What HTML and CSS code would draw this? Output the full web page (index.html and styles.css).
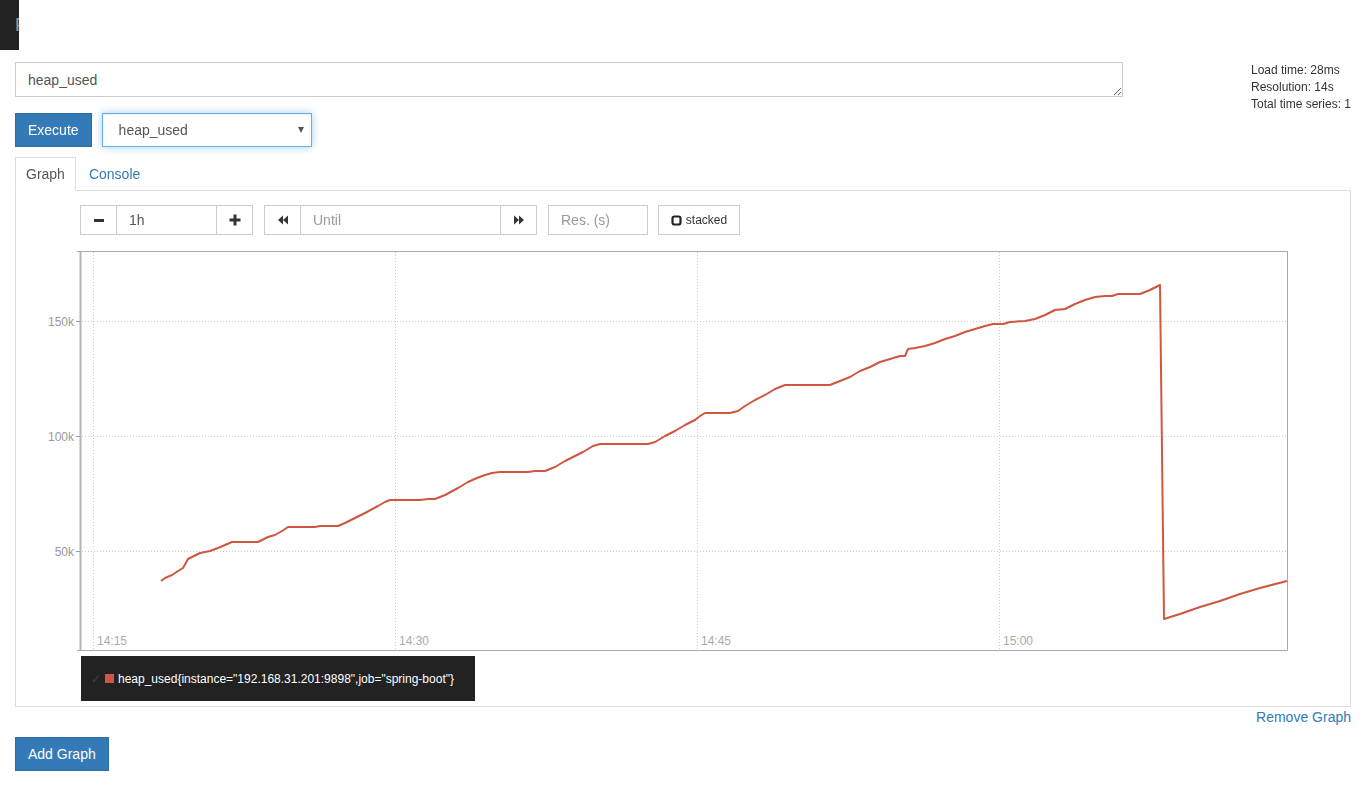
FILE: index.html
```html
<!DOCTYPE html>
<html lang="en">
<head>
    <meta charset="UTF-8">
    <title>Prometheus Time Series Collection and Processing Server</title>
    <link rel="stylesheet" href="styles.css">
</head>
<body>
    <div class="navbar"><span class="brand">Prometheus</span></div>

    <div class="page">
        <div class="query-row">
            <textarea class="expr">heap_used</textarea>
            <div class="eval-stats">
                Load time: 28ms<br>
                Resolution: 14s<br>
                Total time series: 1
            </div>
        </div>

        <div class="exec-row">
            <button class="btn btn-primary">Execute</button>
            <div class="select-wrap">
                <select class="metric"><option>heap_used</option></select>
                <span class="caret"></span>
            </div>
        </div>

        <ul class="tabs">
            <li class="active">Graph</li>
            <li><a href="#">Console</a></li>
        </ul>

        <div class="panel">
            <!-- range / end time / resolution controls -->
            <div class="controls">
                <div class="group">
                    <button class="btn-sm btn-icon">
                        <svg width="12" height="12" viewBox="0 0 12 12"><rect x="1" y="5" width="10" height="3" fill="#333"/></svg>
                    </button>
                    <input class="field range" type="text" value="1h">
                    <button class="btn-sm btn-icon">
                        <svg width="12" height="12" viewBox="0 0 12 12"><rect x="0.5" y="4.5" width="11" height="3" fill="#333"/><rect x="4.5" y="0.5" width="3" height="11" fill="#333"/></svg>
                    </button>
                </div>
                <div class="group">
                    <button class="btn-sm btn-icon">
                        <svg width="12" height="12" viewBox="0 0 12 12"><path d="M6 1.5 L1 6 L6 10.5 Z M11 1.5 L6 6 L11 10.5 Z" fill="#333"/></svg>
                    </button>
                    <input class="field until" type="text" placeholder="Until">
                    <button class="btn-sm btn-icon">
                        <svg width="12" height="12" viewBox="0 0 12 12"><path d="M1 1.5 L6 6 L1 10.5 Z M6 1.5 L11 6 L6 10.5 Z" fill="#333"/></svg>
                    </button>
                </div>
                <input class="field res" type="text" placeholder="Res. (s)">
                <button class="btn-sm stacked">
                    <svg width="11" height="11" viewBox="0 0 11 11"><rect x="1.5" y="1.5" width="8" height="8" rx="2" fill="none" stroke="#222" stroke-width="2.2"/></svg>
                    stacked
                </button>
            </div>

            <svg class="graph" width="1334" height="421" viewBox="16 235 1334 421">
                <!-- grid -->
                <g stroke="#ccc" stroke-width="1" stroke-dasharray="1,2">
                    <line x1="93.5" y1="252" x2="93.5" y2="650"/>
                    <line x1="395.5" y1="252" x2="395.5" y2="650"/>
                    <line x1="697.5" y1="252" x2="697.5" y2="650"/>
                    <line x1="999.5" y1="252" x2="999.5" y2="650"/>
                    <line x1="82" y1="321.5" x2="1287" y2="321.5"/>
                    <line x1="82" y1="436.5" x2="1287" y2="436.5"/>
                    <line x1="82" y1="551.5" x2="1287" y2="551.5"/>
                </g>
                <!-- frame -->
                <g stroke="#aaa" stroke-width="1" fill="none">
                    <line x1="77" y1="251.5" x2="1287.5" y2="251.5"/>
                    <line x1="1287.5" y1="251" x2="1287.5" y2="650.5"/>
                    <line x1="77" y1="650.5" x2="1287.5" y2="650.5"/>
                </g>
                <line x1="80.5" y1="251" x2="80.5" y2="651" stroke="#b4b4b4" stroke-width="2"/>
                <g stroke="#999" stroke-width="1">
                    <line x1="76" y1="321.5" x2="80" y2="321.5"/>
                    <line x1="76" y1="436.5" x2="80" y2="436.5"/>
                    <line x1="76" y1="551.5" x2="80" y2="551.5"/>
                </g>
                <g class="ylabels" text-anchor="end">
                    <text x="74" y="325.5">150k</text>
                    <text x="74" y="440.5">100k</text>
                    <text x="74" y="555.5">50k</text>
                </g>
                <g class="xlabels">
                    <text x="97" y="644.5">14:15</text>
                    <text x="399" y="644.5">14:30</text>
                    <text x="701" y="644.5">14:45</text>
                    <text x="1003" y="644.5">15:00</text>
                </g>
                <polyline fill="none" stroke="#cf5640" stroke-width="2" stroke-linejoin="round"
                    points="161,581 165,578 172,575 178,571 183,568 188,559 190,558 200,553 210,551 218,548 225,545 232,542 258,542 262,540 268,537 275,535 282,531 288,527 315,527 320,526 338,526 345,523 355,518 365,513 378,506 385,502 390,500 420,500 428,499 435,499 445,495 458,488 468,482 477,478 485,475 492,473 500,472 528,472 535,471 545,471 555,467 565,461 575,456 583,452 593,446 600,444 648,444 655,442 665,436 675,431 685,425 695,420 700,416 705,413 730,413 738,411 745,406 755,400 765,395 775,389 785,385 830,385 840,381 850,377 860,371 870,367 880,362 890,359 900,356 905,356 908,349 915,348 925,346 935,343 945,339 955,336 965,332 975,329 985,326 993,324 1003,324 1010,322 1025,321 1035,319 1045,315 1055,310 1065,309 1075,304 1085,300 1095,297 1105,296 1112,296 1118,294 1140,294 1150,290 1160,285 1164,619 1180,614 1200,607 1220,601 1240,594 1260,588 1287,581"/>
            </svg>

            <div class="legend">
                <span class="check">&#10003;</span>
                <span class="swatch"></span>
                <span class="series">heap_used{instance="192.168.31.201:9898",job="spring-boot"}</span>
            </div>
        </div>

        <div class="remove-row"><a href="#">Remove Graph</a></div>
        <button class="btn btn-primary">Add Graph</button>
    </div>
</body>
</html>
```

FILE: styles.css
```css
* {
    margin: 0;
    padding: 0;
    box-sizing: border-box;
}
body {
    font-family: "Liberation Sans", Arial, sans-serif;
    font-size: 14px;
    line-height: 20px;
    color: #333;
    background: #fff;
}
a {
    color: #337ab7;
    text-decoration: none;
}
.navbar {
    width: 19px;
    height: 50px;
    background: #222;
    overflow: hidden;
    white-space: nowrap;
}
.brand {
    display: block;
    padding-left: 15px;
    line-height: 50px;
    font-size: 18px;
    color: #9d9d9d;
}
.page {
    padding: 0 17px 0 15px;
}
.query-row {
    display: flex;
    align-items: flex-start;
    height: 35px;
    margin-top: 12px;
}
.expr {
    width: 1108px;
    height: 35px;
    padding: 7px 12px;
    border: 1px solid #ccc;
    font-family: inherit;
    font-size: 14px;
    line-height: 20px;
    color: #555;
    resize: vertical;
    outline: none;
}
.eval-stats {
    margin-left: auto;
    margin-top: 0;
    width: 100px;
    font-size: 12px;
    line-height: 17px;
    color: #333;
    white-space: nowrap;
}
.exec-row {
    display: flex;
    gap: 10px;
    margin-top: 16px;
}
.btn {
    height: 34px;
    padding: 6px 12px;
    border: 1px solid #2e6da4;
    border-radius: 0;
    font-family: inherit;
    font-size: 14px;
    line-height: 20px;
}
.btn-primary {
    background: #337ab7;
    color: #fff;
}
.select-wrap {
    position: relative;
}
.metric {
    appearance: none;
    width: 210px;
    height: 34px;
    padding: 0 16px;
    border: 1px solid #66afe9;
    box-shadow: inset 0 1px 1px rgba(0,0,0,.075), 0 0 8px rgba(102,175,233,.6);
    background: #fff;
    font-family: inherit;
    font-size: 14px;
    color: #555;
    outline: none;
}
.caret {
    position: absolute;
    right: 8px;
    top: 14px;
    border-left: 3.5px solid transparent;
    border-right: 3.5px solid transparent;
    border-top: 6px solid #555;
}
.tabs {
    display: flex;
    list-style: none;
    margin-top: 10px;
    border-bottom: 1px solid #ddd;
    height: 34px;
}
.tabs li {
    height: 34px;
    padding: 6px 10px;
    margin-right: 2px;
    line-height: 20px;
    border: 1px solid transparent;
    margin-bottom: -1px;
}
.tabs li.active {
    color: #555;
    background: #fff;
    border-color: #ddd #ddd transparent #ddd;
}
.panel {
    border: 1px solid #ddd;
    border-top: none;
    padding: 14px 0 5px 0;
}
.controls {
    display: flex;
    gap: 11px;
    margin-left: 64px;
    height: 30px;
}
.group {
    display: flex;
}
.btn-sm {
    height: 30px;
    border: 1px solid #ccc;
    background: #fff;
    font-family: inherit;
    font-size: 12px;
    color: #333;
    display: flex;
    align-items: center;
    justify-content: center;
}
.btn-icon {
    width: 37px;
}
.field {
    height: 30px;
    border: 1px solid #ccc;
    border-left: none;
    border-right: none;
    padding: 0 12px;
    font-family: inherit;
    font-size: 14px;
    color: #555;
    outline: none;
}
.field::placeholder {
    color: #999;
}
.range {
    width: 99px;
}
.until {
    width: 199px;
}
.res {
    width: 100px;
    border: 1px solid #ccc;
}
.stacked {
    width: 82px;
    gap: 4px;
    margin-left: -1px;
}
.graph {
    display: block;
}
.ylabels text {
    font-family: "Liberation Sans", Arial, sans-serif;
    font-size: 12px;
    fill: #999;
}
.xlabels text {
    font-family: "Liberation Sans", Arial, sans-serif;
    font-size: 12px;
    fill: #aaa;
}
.legend {
    display: flex;
    align-items: center;
    width: 394px;
    height: 45px;
    margin-left: 65px;
    padding-left: 10px;
    background: #222;
    color: #fff;
    font-size: 12px;
}
.check {
    color: #3a3f45;
    margin-right: 4px;
}
.swatch {
    width: 9px;
    height: 9px;
    background: #cf5640;
    margin-right: 4px;
}
.remove-row {
    text-align: right;
    height: 20px;
}
.remove-row + .btn {
    margin-top: 10px;
}
```
